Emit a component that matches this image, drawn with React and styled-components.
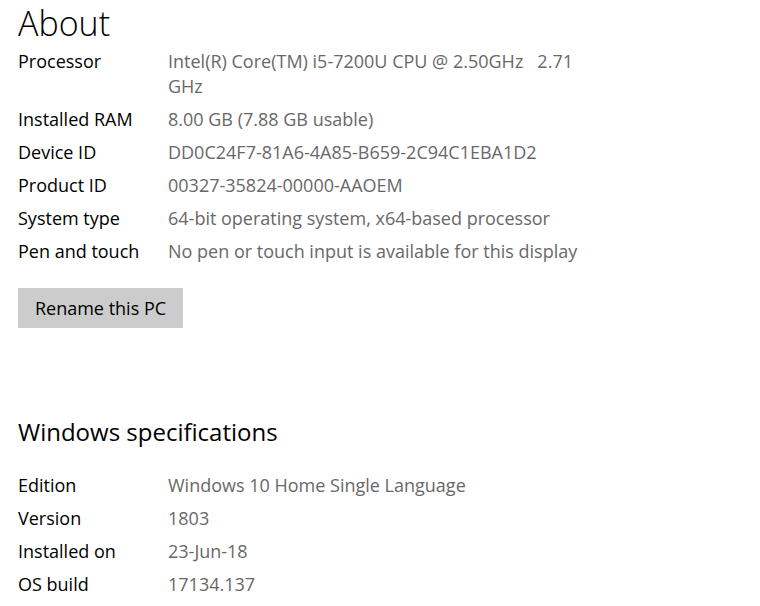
import React from "react";
import styled, { createGlobalStyle } from "styled-components";

const about = [
  ["Processor", "Intel(R) Core(TM) i5-7200U CPU @ 2.50GHz\u00a0\u00a0 2.71 GHz"],
  ["Installed RAM", "8.00 GB (7.88 GB usable)"],
  ["Device ID", "DD0C24F7-81A6-4A85-B659-2C94C1EBA1D2"],
  ["Product ID", "00327-35824-00000-AAOEM"],
  ["System type", "64-bit operating system, x64-based processor"],
  ["Pen and touch", "No pen or touch input is available for this display"],
];

const specs = [
  ["Edition", "Windows 10 Home Single Language"],
  ["Version", "1803"],
  ["Installed on", "23-Jun-18"],
  ["OS build", "17134.137"],
];

export default function App() {
  return (
    <>
      <GlobalStyle />
      <Page>
        <Title>About</Title>
        <Table>
          {about.map(([k, v]) => (
            <Row key={k}>
              <Label>{k}</Label>
              <Value>{v}</Value>
            </Row>
          ))}
        </Table>
        <Button>Rename this PC</Button>
        <Heading>Windows specifications</Heading>
        <Table>
          {specs.map(([k, v]) => (
            <Row key={k}>
              <Label>{k}</Label>
              <Value>{v}</Value>
            </Row>
          ))}
        </Table>
      </Page>
    </>
  );
}

const GlobalStyle = createGlobalStyle`
  body {
    margin: 0;
    background: #fff;
    font-family: "Open Sans", "Noto Sans", sans-serif;
  }
`;

const Page = styled.div`
  padding: 0 18px;
  display: flex;
  flex-direction: column;
  align-items: flex-start;
`;

const Title = styled.h1`
  margin: 0 0 3px;
  font-weight: 300;
  font-size: 34px;
  line-height: 46px;
  color: #000;
`;

const Heading = styled.h2`
  margin: 88px 0 25px;
  font-weight: 400;
  font-size: 24px;
  line-height: 32px;
  color: #000;
`;

const Table = styled.div`
  display: flex;
  flex-direction: column;
  gap: 8px;
`;

const Row = styled.div`
  display: grid;
  grid-template-columns: 150px 420px;
  font-size: 18px;
  line-height: 25px;
`;

const Label = styled.div`
  color: #000;
`;

const Value = styled.div`
  color: #686868;
`;

const Button = styled.button`
  margin-top: 24px;
  height: 40px;
  width: 165px;
  border: none;
  background: #cccccc;
  color: #000;
  font-family: inherit;
  font-size: 18px;
  padding: 0;
`;
